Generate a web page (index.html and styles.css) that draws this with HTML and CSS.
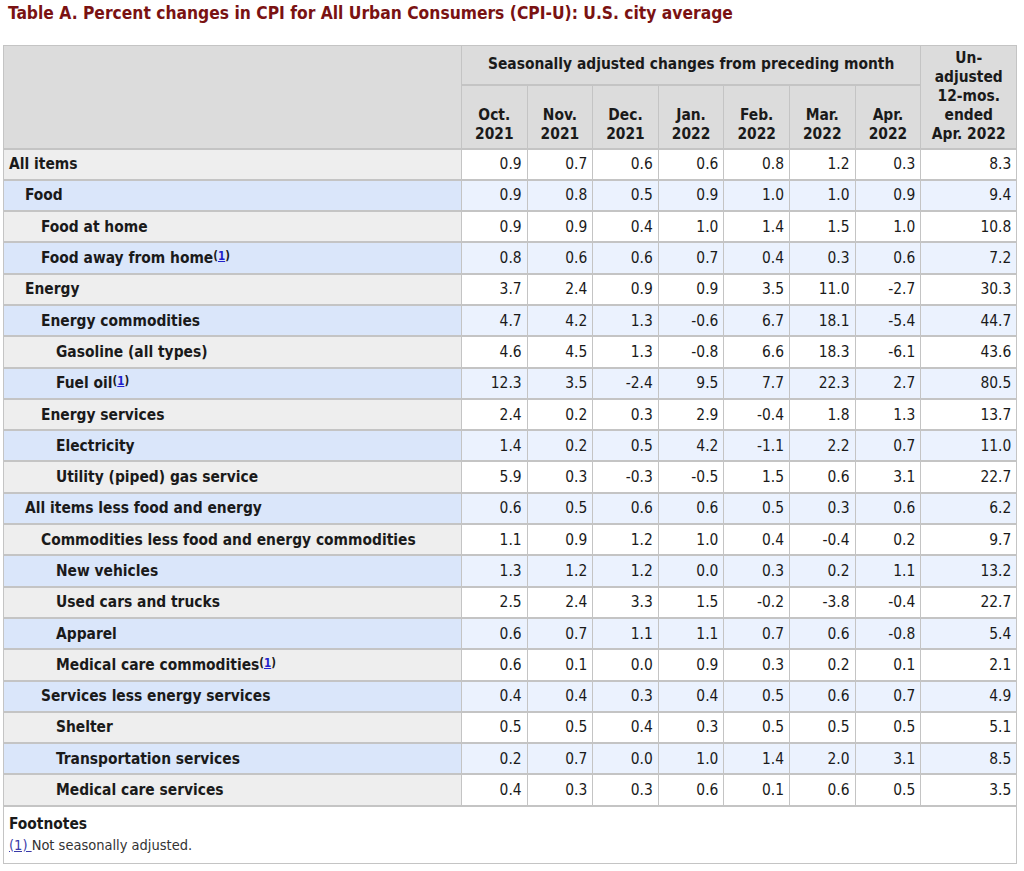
FILE: index.html
```html
<!DOCTYPE html>
<html>
<head>
<meta charset="utf-8">
<link rel="stylesheet" href="styles.css">
</head>
<body>
<h1 class="title">Table A. Percent changes in CPI for All Urban Consumers (CPI-U): U.S. city average</h1>
<table class="cpi">
  <colgroup>
    <col class="c-label"><col class="c-m"><col class="c-m"><col class="c-m"><col class="c-m"><col class="c-m"><col class="c-m"><col class="c-m"><col class="c-un">
  </colgroup>
  <thead>
    <tr class="h1">
      <th rowspan="2" class="blank"></th>
      <th colspan="7" class="group">Seasonally adjusted changes from preceding month</th>
      <th rowspan="2" class="unadj">Un-<br>adjusted<br>12-mos.<br>ended<br>Apr. 2022</th>
    </tr>
    <tr class="h2">
      <th>Oct.<br>2021</th><th>Nov.<br>2021</th><th>Dec.<br>2021</th><th>Jan.<br>2022</th><th>Feb.<br>2022</th><th>Mar.<br>2022</th><th>Apr.<br>2022</th>
    </tr>
  </thead>
  <tbody>
    <tr><th class="l0">All items</th><td>0.9</td><td>0.7</td><td>0.6</td><td>0.6</td><td>0.8</td><td>1.2</td><td>0.3</td><td>8.3</td></tr>
    <tr><th class="l1">Food</th><td>0.9</td><td>0.8</td><td>0.5</td><td>0.9</td><td>1.0</td><td>1.0</td><td>0.9</td><td>9.4</td></tr>
    <tr><th class="l2">Food at home</th><td>0.9</td><td>0.9</td><td>0.4</td><td>1.0</td><td>1.4</td><td>1.5</td><td>1.0</td><td>10.8</td></tr>
    <tr><th class="l2">Food away from home<span class="fn">(<a href="#fn1">1</a>)</span></th><td>0.8</td><td>0.6</td><td>0.6</td><td>0.7</td><td>0.4</td><td>0.3</td><td>0.6</td><td>7.2</td></tr>
    <tr><th class="l1">Energy</th><td>3.7</td><td>2.4</td><td>0.9</td><td>0.9</td><td>3.5</td><td>11.0</td><td>-2.7</td><td>30.3</td></tr>
    <tr><th class="l2">Energy commodities</th><td>4.7</td><td>4.2</td><td>1.3</td><td>-0.6</td><td>6.7</td><td>18.1</td><td>-5.4</td><td>44.7</td></tr>
    <tr><th class="l3">Gasoline (all types)</th><td>4.6</td><td>4.5</td><td>1.3</td><td>-0.8</td><td>6.6</td><td>18.3</td><td>-6.1</td><td>43.6</td></tr>
    <tr><th class="l3">Fuel oil<span class="fn">(<a href="#fn1">1</a>)</span></th><td>12.3</td><td>3.5</td><td>-2.4</td><td>9.5</td><td>7.7</td><td>22.3</td><td>2.7</td><td>80.5</td></tr>
    <tr><th class="l2">Energy services</th><td>2.4</td><td>0.2</td><td>0.3</td><td>2.9</td><td>-0.4</td><td>1.8</td><td>1.3</td><td>13.7</td></tr>
    <tr><th class="l3">Electricity</th><td>1.4</td><td>0.2</td><td>0.5</td><td>4.2</td><td>-1.1</td><td>2.2</td><td>0.7</td><td>11.0</td></tr>
    <tr><th class="l3">Utility (piped) gas service</th><td>5.9</td><td>0.3</td><td>-0.3</td><td>-0.5</td><td>1.5</td><td>0.6</td><td>3.1</td><td>22.7</td></tr>
    <tr><th class="l1">All items less food and energy</th><td>0.6</td><td>0.5</td><td>0.6</td><td>0.6</td><td>0.5</td><td>0.3</td><td>0.6</td><td>6.2</td></tr>
    <tr><th class="l2">Commodities less food and energy commodities</th><td>1.1</td><td>0.9</td><td>1.2</td><td>1.0</td><td>0.4</td><td>-0.4</td><td>0.2</td><td>9.7</td></tr>
    <tr><th class="l3">New vehicles</th><td>1.3</td><td>1.2</td><td>1.2</td><td>0.0</td><td>0.3</td><td>0.2</td><td>1.1</td><td>13.2</td></tr>
    <tr><th class="l3">Used cars and trucks</th><td>2.5</td><td>2.4</td><td>3.3</td><td>1.5</td><td>-0.2</td><td>-3.8</td><td>-0.4</td><td>22.7</td></tr>
    <tr><th class="l3">Apparel</th><td>0.6</td><td>0.7</td><td>1.1</td><td>1.1</td><td>0.7</td><td>0.6</td><td>-0.8</td><td>5.4</td></tr>
    <tr><th class="l3">Medical care commodities<span class="fn">(<a href="#fn1">1</a>)</span></th><td>0.6</td><td>0.1</td><td>0.0</td><td>0.9</td><td>0.3</td><td>0.2</td><td>0.1</td><td>2.1</td></tr>
    <tr><th class="l2">Services less energy services</th><td>0.4</td><td>0.4</td><td>0.3</td><td>0.4</td><td>0.5</td><td>0.6</td><td>0.7</td><td>4.9</td></tr>
    <tr><th class="l3">Shelter</th><td>0.5</td><td>0.5</td><td>0.4</td><td>0.3</td><td>0.5</td><td>0.5</td><td>0.5</td><td>5.1</td></tr>
    <tr><th class="l3">Transportation services</th><td>0.2</td><td>0.7</td><td>0.0</td><td>1.0</td><td>1.4</td><td>2.0</td><td>3.1</td><td>8.5</td></tr>
    <tr><th class="l3">Medical care services</th><td>0.4</td><td>0.3</td><td>0.3</td><td>0.6</td><td>0.1</td><td>0.6</td><td>0.5</td><td>3.5</td></tr>
  </tbody>
  <tfoot>
    <tr>
      <td colspan="9" class="foot">
        <div class="foot-title">Footnotes</div>
        <div class="foot-text" id="fn1"><a href="#fn1">(1) </a>Not seasonally adjusted.</div>
      </td>
    </tr>
  </tfoot>
</table>
</body>
</html>
```
FILE: styles.css
```css
html, body {
  margin: 0;
  padding: 0;
  background: #ffffff;
}
body {
  font-family: "DejaVu Sans Condensed", "DejaVu Sans", Verdana, sans-serif;
  color: #1a1a1a;
}
.title {
  margin: 0;
  padding: 2px 0 0 8px;
  height: 45px;
  box-sizing: border-box;
  font-size: 17.3px;
  line-height: 22px;
  font-weight: bold;
  color: #7a1212;
}
.cpi {
  margin-left: 3px;
  width: 1013px;
  border-collapse: collapse;
  table-layout: fixed;
  border: 1px solid #c4c4c4;
  font-size: 15.4px;
}
.c-label { width: 458px; }
.c-m { width: 65.6px; }
.c-un { width: 96px; }

.cpi th, .cpi td {
  border: 1px solid #c4c4c4;
  border-top-width: 2px;
  padding: 0 5px;
}
.cpi thead th {
  background: #dcdcdc;
  font-weight: bold;
  color: #1a1a1a;
  text-align: center;
  line-height: 19px;
}
.h1 { height: 39px; }
.h1 th { border-top-width: 1px; }
.h1 .unadj {
  vertical-align: middle;
  padding: 0 1px;
}
.h2 { height: 64px; }
.h2 th {
  vertical-align: bottom;
  padding-bottom: 4px;
}
.cpi tbody tr { height: 31.3px; }
.cpi tbody th {
  text-align: left;
  font-weight: bold;
  background: #eeeeee;
  color: #1a1a1a;
}
.cpi tbody td {
  text-align: right;
  background: #ffffff;
  color: #1a1a1a;
}
.cpi tbody tr:nth-child(even) th { background: #dae6fa; }
.cpi tbody tr:nth-child(even) td { background: #ebf2fe; }

.l0 { padding-left: 5px !important; }
.l1 { padding-left: 21px !important; }
.l2 { padding-left: 37px !important; }
.l3 { padding-left: 52px !important; }

.fn {
  font-size: 11.5px;
  vertical-align: 3px;
  font-weight: bold;
  color: #1a1a1a;
}
.fn a {
  color: #2020cc;
  text-decoration: underline;
}
.cpi tfoot td.foot {
  background: #ffffff;
  text-align: left;
  padding: 8px 5px 6px 5px;
  height: 41px;
  vertical-align: top;
}
.foot-title {
  font-weight: bold;
  font-size: 15.4px;
  line-height: 18px;
}
.foot-text {
  font-size: 14.5px;
  line-height: 24px;
  color: #333;
}
.foot-text a {
  color: #3a3aa8;
  text-decoration: underline;
}
```
